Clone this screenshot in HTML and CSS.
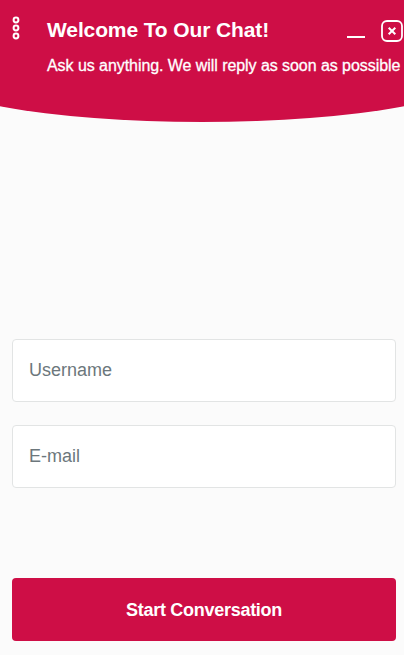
FILE: index.html
```
<!DOCTYPE html>
<html lang="en">
<head>
    <meta charset="UTF-8">
    <meta name="viewport" content="width=device-width, initial-scale=1.0">
    <title>Chat</title>
    <link rel="stylesheet" href="styles.css">
</head>
<body>

    <div class="chat">
        <header class="chat-header">
            <svg class="menu-icon" width="8" height="24" viewBox="0 0 8 24">
                <circle cx="4" cy="4" r="2.4"/>
                <circle cx="4" cy="12" r="2.4"/>
                <circle cx="4" cy="20" r="2.4"/>
            </svg>
            <div class="header-text">
                <h1>Welcome To Our Chat!</h1>
                <p>Ask us anything. We will reply as soon as possible</p>
            </div>
            <div class="header-actions">
                <svg class="minimize-icon" width="18" height="22" viewBox="0 0 18 22">
                    <path d="M0 17h18"/>
                </svg>
                <svg class="close-icon" width="22" height="22" viewBox="0 0 22 22">
                    <rect x="1" y="1" width="20" height="20" rx="5"/>
                    <path d="M7.7 7.7l6.6 6.6M14.3 7.7l-6.6 6.6"/>
                </svg>
            </div>
        </header>

        <!-- Login form -->
        <form class="chat-form">
            <input type="text" placeholder="Username">
            <input type="text" placeholder="E-mail">
            <button type="button">Start Conversation</button>
        </form>
    </div>

</body>
</html>
```
FILE: styles.css
```
body {
    margin: 0;
    font-family: "Liberation Sans", Arial, sans-serif;
    background-color: #fbfbfb;
}

.chat {
    height: 655px;
    overflow: hidden;
}

/* wider than the page, so only the middle of the curve shows */
.chat-header {
    display: flex;
    align-items: flex-start;
    box-sizing: border-box;
    height: 122px;
    margin: 0 -80px;
    padding: 0 81px 0 92px;
    color: #fff;
    background-color: #ce0e46;
    border-radius: 0 0 50% 50% / 0 0 52px 52px;
}

.menu-icon {
    flex-shrink: 0;
    margin-top: 16px;
}

.menu-icon circle {
    fill: none;
    stroke: #fff;
    stroke-width: 2;
}

.header-text {
    width: 222px;
    margin-left: 27px;
    white-space: nowrap;
}

.header-text h1 {
    margin: 18px 0 0;
    font-size: 21px;
    line-height: 24px;
    letter-spacing: -0.12px;
}

.header-text p {
    margin: 14px 0 0;
    font-size: 16px;
    line-height: 20px;
    letter-spacing: -0.06px;
    -webkit-text-stroke: 0.3px #fff;
}

.header-actions {
    display: flex;
    gap: 16px;
    margin: 20px 0 0 auto;
}

.minimize-icon,
.close-icon {
    fill: none;
    stroke: #fff;
    stroke-width: 2;
}

.close-icon rect {
    stroke-width: 1.8;
}

.chat-form {
    display: flex;
    flex-direction: column;
    padding: 217px 8px 0 12px;
}

.chat-form input {
    box-sizing: border-box;
    height: 63px;
    margin-bottom: 23px;
    padding: 0 16px;
    font-family: inherit;
    font-size: 18px;
    background-color: #fff;
    border: 1px solid #e2e4e4;
    border-radius: 4px;
    outline: none;
}

.chat-form input::placeholder {
    color: #6c777c;
}

.chat-form button {
    height: 63px;
    margin-top: 67px;
    padding: 2px 0 0;
    font-family: inherit;
    font-size: 18px;
    font-weight: bold;
    letter-spacing: -0.28px;
    color: #fff;
    background-color: #ce0e46;
    border: none;
    border-radius: 4px;
    cursor: pointer;
}
```
